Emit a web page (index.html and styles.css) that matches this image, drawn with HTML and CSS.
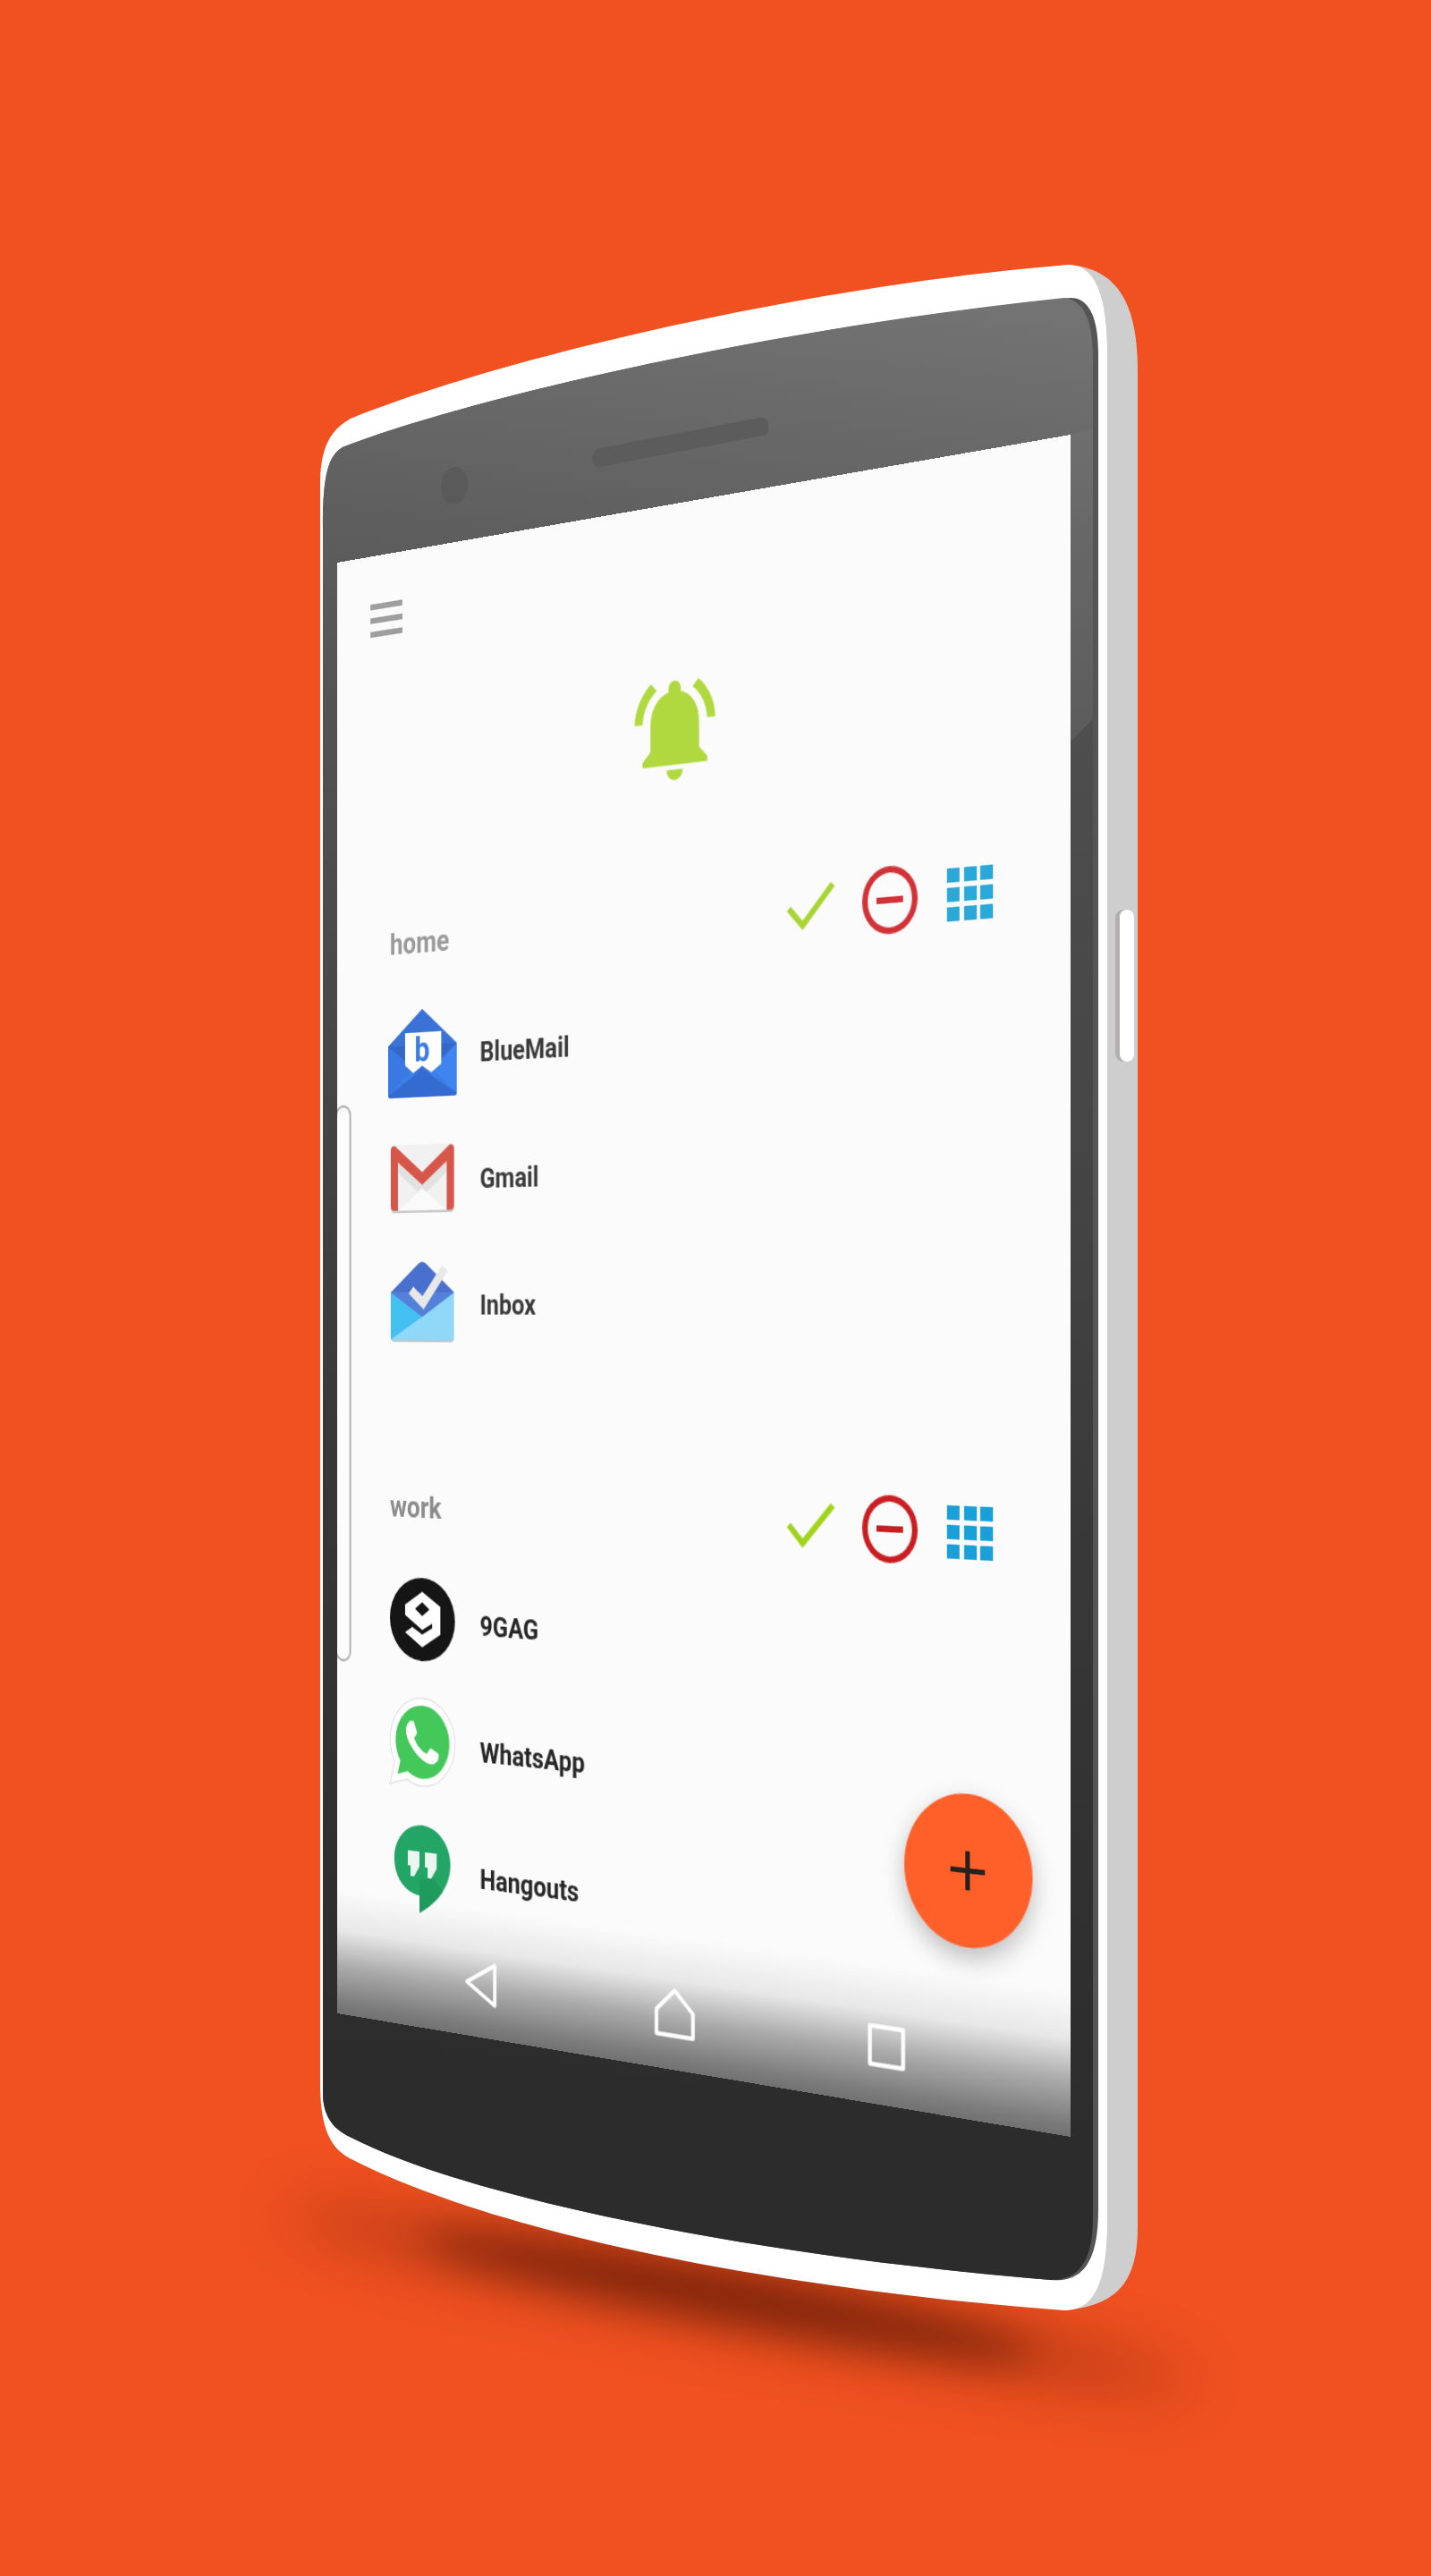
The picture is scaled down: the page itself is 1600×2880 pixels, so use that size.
FILE: index.html
```html
<!DOCTYPE html>
<html lang="en">
<head>
<meta charset="utf-8">
<title>Notification profiles</title>
<link rel="stylesheet" href="styles.css">
</head>
<body>
<main class="stage">
  <svg class="phone-art" viewBox="0 0 1600 2880" width="1600" height="2880" aria-hidden="true">
    <defs>
      <filter id="soft" x="-30%" y="-300%" width="160%" height="700%" color-interpolation-filters="sRGB"><feGaussianBlur stdDeviation="22"/></filter>
      <filter id="softer" x="-30%" y="-300%" width="160%" height="700%" color-interpolation-filters="sRGB"><feGaussianBlur stdDeviation="34"/></filter>
      <linearGradient id="face" gradientUnits="userSpaceOnUse" x1="1000" y1="330" x2="760" y2="2350">
        <stop offset="0" stop-color="#737373"/>
        <stop offset="0.15" stop-color="#5f5f5f"/>
        <stop offset="0.25" stop-color="#545454"/>
        <stop offset="0.4" stop-color="#4a4a4a"/>
        <stop offset="0.65" stop-color="#393939"/>
        <stop offset="0.82" stop-color="#323232"/>
        <stop offset="1" stop-color="#2c2c2c"/>
      </linearGradient>
      <linearGradient id="dusk" gradientUnits="userSpaceOnUse" x1="0" y1="805" x2="0" y2="1400">
        <stop offset="0" stop-color="#000" stop-opacity=".1"/>
        <stop offset="1" stop-color="#000" stop-opacity="0"/>
      </linearGradient>
    </defs>
    <ellipse class="shade" cx="826" cy="2570" rx="520" ry="34" transform="rotate(10.7 826 2570)" filter="url(#softer)" opacity="0.4"/>
    <ellipse class="shade" cx="815" cy="2567" rx="350" ry="26" transform="rotate(10.7 815 2567)" filter="url(#soft)" opacity="0.62"/>
    <path class="side" d="M1194 296C1250 300 1272 340 1272 415V2490C1272 2550 1250 2578 1190 2583Z"/>
    <rect class="button-shade" x="1247" y="1017" width="21" height="170" rx="9"/>
    <rect class="button" x="1252" y="1017" width="16" height="170" rx="8"/>
    <path class="shell" d="M1194 296C1225 296 1238 330 1238 400V2480C1238 2550 1225 2583 1190 2583C880 2560 560 2500 391 2413C370 2402 358 2380 358 2330V540C358 500 370 480 392 468C560 400 900 320 1194 296Z"/>
    <path class="rim" d="M1197 333C1215 333 1228 350 1228 395V2470C1228 2530 1210 2552 1175 2549C880 2525 540 2465 391 2389C372 2380 361 2365 361 2340V590C361 530 367 510 383 500C540 440 880 365 1197 333Z"/>
    <path class="face" d="M1190 333C1208 335 1222 352 1222 400V2480C1222 2530 1205 2549 1175 2549C880 2525 540 2465 391 2389C372 2380 361 2365 361 2340V590C361 530 367 510 383 500C540 440 880 365 1190 333Z"/>
    <path class="glint" d="M1197 486 1222 480V804L1197 829Z"/>
    <path class="dusk" d="M1197 829 1222 804V1400H1197Z"/>
    <ellipse class="lens" cx="508" cy="543" rx="15" ry="21" transform="rotate(8 508 543)"/>
    <path class="speaker" d="M672 501 849 467C857 465 860 472 859 480 858 490 856 486 848 488L670 522C664 523 661 517 662 511 663 505 666 502 672 501Z"/>
  </svg>

  <section class="screen">
    <header class="toolbar">
      <div class="menu"><span class="menu-bar"></span><span class="menu-bar"></span><span class="menu-bar"></span></div>
    </header>
    <svg class="bell" viewBox="0 0 24 24" width="96" height="100" preserveAspectRatio="none" aria-hidden="true"><path d="M7.58 4.08L6.15 2.65C3.75 4.48 2.17 7.3 2.03 10.5h2c.15-2.65 1.51-4.97 3.55-6.42zM19.97 10.5h2c-.15-3.2-1.73-6.02-4.12-7.85l-1.42 1.43c2.02 1.45 3.39 3.77 3.54 6.42zM18 11c0-3.07-1.64-5.64-4.5-6.32V4c0-.83-.67-1.5-1.5-1.5s-1.5.67-1.5 1.5v.68C7.63 5.36 6 7.92 6 11v5l-2 2v1h16v-1l-2-2v-5zm-6 11c.14 0 .27-.01.4-.04.65-.14 1.18-.58 1.44-1.18.1-.24.15-.5.15-.78h-4c.01 1.1.9 2 2.01 2z"/></svg>

    <div class="section section-home">
      <div class="section-head">
        <h2 class="section-title">home</h2>
        <div class="actions">
          <svg class="tick" viewBox="0 0 40 32" width="40" height="32" aria-hidden="true"><polyline points="-1,17 12,31 40,0"/></svg>
          <div class="minus"></div>
          <div class="tiles"><i></i><i></i><i></i><i></i><i></i><i></i><i></i><i></i><i></i></div>
        </div>
      </div>
      <div class="app-row">
        <svg class="app-icon" viewBox="0 0 80 80" width="80" height="80" aria-hidden="true">
          <path fill="#3c7fe8" d="M2 33 40 2 78 33V75a3 3 0 0 1-3 3H5a3 3 0 0 1-3-3Z"/>
          <path fill="#3a72d6" d="M2 33 40 2 78 33 40 64Z"/>
          <path fill="#3f84f0" d="M78 33V76L48 52Z"/>
          <path fill="#3a79e2" d="M2 33V76L32 52Z"/>
          <path fill="#3468c8" d="M2 33H21V46ZM78 33H61V46Z"/>
          <path fill="#336bd0" d="M2 76 40 54 78 76V75a3 3 0 0 1-3 3H5a3 3 0 0 1-3-3Z"/>
          <path fill="#fff" d="M21 22H61V50L50 57 40 51 30 57 21 50Z"/>
          <text class="logo-b" x="40" y="47">b</text>
        </svg>
        <span class="app-name">BlueMail</span>
      </div>
      <div class="app-row">
        <svg class="app-icon" viewBox="0 0 80 80" width="80" height="80" aria-hidden="true">
          <rect fill="#c9c9c9" x="5" y="13" width="70" height="57" rx="4"/>
          <rect fill="#f1f1f1" x="5" y="11" width="70" height="57" rx="4"/>
          <path fill="#e2e2e2" d="M13 26 40 46 67 26V35L40 56 13 35Z"/>
          <path fill="#fafafa" d="M13 68 40 49 67 68Z"/>
          <path fill="#d6574a" d="M5 15C5 12 8 11 10 12L40 35 70 12C72 11 75 12 75 15V64A4 4 0 0 1 71 68H67V26L40 46 13 26V68H9A4 4 0 0 1 5 64Z"/>
        </svg>
        <span class="app-name">Gmail</span>
      </div>
      <div class="app-row">
        <svg class="app-icon" viewBox="0 0 80 80" width="80" height="80" aria-hidden="true">
          <path fill="#b6c9d2" d="M5 33H75V70A4 4 0 0 1 71 74H9A4 4 0 0 1 5 70Z"/>
          <path fill="#8fd8f8" d="M5 31H75V68A4 4 0 0 1 71 72H9A4 4 0 0 1 5 68Z"/>
          <path fill="#44bff2" d="M5 31 40 52 5 72Z"/>
          <path fill="#4a70cd" d="M5 31 36 6Q40 3 44 6L75 31 40 52Z"/>
          <path fill="#5480da" d="M5 31H75L40 52Z"/>
          <polyline class="inbox-tick" points="27.5,29 41,40 65,10"/>
        </svg>
        <span class="app-name">Inbox</span>
      </div>
    </div>

    <div class="section section-work">
      <div class="section-head">
        <h2 class="section-title">work</h2>
        <div class="actions">
          <svg class="tick" viewBox="0 0 40 32" width="40" height="32" aria-hidden="true"><polyline points="-1,17 12,31 40,0"/></svg>
          <div class="minus"></div>
          <div class="tiles"><i></i><i></i><i></i><i></i><i></i><i></i><i></i><i></i><i></i></div>
        </div>
      </div>
      <div class="app-row">
        <svg class="app-icon" viewBox="0 0 80 80" width="80" height="80" aria-hidden="true">
          <circle fill="#151515" cx="40" cy="41" r="36"/>
          <path fill="#fff" fill-rule="evenodd" d="M40 17 60 29V53L40 65 21 53 29 48 40 54 51 48V44L40 50 21 38V29ZM40 26 32 32 40 38 48 32Z"/>
        </svg>
        <span class="app-name">9GAG</span>
      </div>
      <div class="app-row">
        <svg class="app-icon" viewBox="-1.3 -0.3 26.6 25" width="80" height="80" preserveAspectRatio="none" aria-hidden="true">
          <path fill="#fff" stroke="#dcdcdc" stroke-width=".3" d="M20.464 3.488A11.815 11.815 0 0 0 12.05 0C5.495 0 .16 5.335.157 11.892c0 2.096.547 4.142 1.588 5.945L.057 24l6.305-1.654a11.882 11.882 0 0 0 5.683 1.448h.005c6.554 0 11.89-5.335 11.893-11.893a11.821 11.821 0 0 0-3.48-8.413z"/>
          <path class="wa-bubble" d="M12.051 21.785h-.004a9.87 9.87 0 0 1-5.031-1.378l-.361-.214-3.741.982.998-3.648-.235-.374a9.86 9.86 0 0 1-1.51-5.26c.001-5.45 4.436-9.884 9.888-9.884 2.64 0 5.122 1.03 6.988 2.898a9.825 9.825 0 0 1 2.893 6.994c-.003 5.45-4.437 9.884-9.885 9.884"/>
          <path fill="#fff" d="M17.472 14.382c-.297-.149-1.758-.867-2.03-.967-.273-.099-.471-.148-.67.15-.197.297-.767.966-.94 1.164-.173.199-.347.223-.644.075-.297-.15-1.255-.463-2.39-1.475-.883-.788-1.48-1.761-1.653-2.059-.173-.297-.018-.458.13-.606.134-.133.298-.347.446-.52.149-.174.198-.298.298-.497.099-.198.05-.371-.025-.52-.075-.149-.669-1.612-.916-2.207-.242-.579-.487-.5-.669-.51-.173-.008-.371-.01-.57-.01-.198 0-.52.074-.792.372-.272.297-1.04 1.016-1.04 2.479 0 1.462 1.065 2.875 1.213 3.074.149.198 2.096 3.2 5.077 4.487.709.306 1.262.489 1.694.625.712.227 1.36.195 1.871.118.571-.085 1.758-.719 2.006-1.413.248-.694.248-1.289.173-1.413-.074-.124-.272-.198-.57-.347"/>
        </svg>
        <span class="app-name">WhatsApp</span>
      </div>
      <div class="app-row">
        <svg class="app-icon" viewBox="0 0 80 80" width="80" height="80" aria-hidden="true">
          <path fill="#23a566" d="M40 3C23 3 9 17 9 34C9 51 21 63 37 64V79C52 71 71 56 71 34C71 17 57 3 40 3Z"/>
          <path fill="#1d9558" d="M37 64V79C46 74 56 67 63 58L52 47 37 51Z" opacity=".6"/>
          <path fill="#eaf6ef" d="M24 26H37V39L31 48H27V39H24ZM43 26H56V39L50 48H46V39H43Z"/>
        </svg>
        <span class="app-name">Hangouts</span>
      </div>
    </div>

    <div class="drawer-handle"></div>

    <nav class="nav">
      <svg viewBox="0 0 36 40" width="36" height="40" aria-hidden="true"><path d="M3 20 33 3V37Z"/></svg>
      <svg viewBox="0 0 42 42" width="42" height="42" aria-hidden="true"><path d="M21 2 39 19V39H3V19Z"/></svg>
      <svg viewBox="0 0 36 36" width="36" height="36" aria-hidden="true"><path d="M3 3H33V33H3Z"/></svg>
    </nav>

    <div class="fab">
      <svg viewBox="0 0 30 30" width="30" height="30" aria-hidden="true"><path d="M13 0H17V13H30V17H17V30H13V17H0V13H13Z"/></svg>
    </div>
  </section>
</main>
</body>
</html>
```
FILE: styles.css
```css
* { box-sizing: border-box; }
html, body { margin: 0; padding: 0; }
body { background: #f15120; font-family: Roboto, "Liberation Sans", sans-serif; }

.stage { position: relative; width: 1600px; height: 2880px; overflow: hidden; background: #f15120; }
.phone-art { position: absolute; left: 0; top: 0; display: block; }

.shade { fill: #561503; }
.side { fill: #cecece; }
.button-shade { fill: #b3afad; }
.button { fill: #fff; }
.shell { fill: #fff; }
.rim { fill: #555; }
.face { fill: url(#face); }
.glint { fill: #fff; opacity: .03; }
.dusk { fill: url(#dusk); }
.lens { fill: #5a5a5a; }
.speaker { fill: #5c5c5c; }

.screen {
  position: absolute; left: 0; top: 0;
  width: 720px; height: 1280px;
  display: flex; flex-direction: column;
  overflow: hidden;
  background: #fbfbfb;
  transform-origin: 0 0;
  transform: matrix3d(0.8934, -0.29828, 0, -0.00020508, 0, 1.26719, 0, 0, 0, 0, 1, 0, 377, 629, 0, 1);
}

.toolbar { flex: none; height: 112px; padding-left: 38px; display: flex; align-items: center; }
.menu { display: flex; flex-direction: column; gap: 7px; filter: blur(.4px); }
.menu-bar { display: block; width: 36px; height: 5px; background: #9e9e9e; }

.bell { flex: none; align-self: center; margin-top: 22px; fill: #b0d93f; }

.section { flex: none; }
.section-home { margin-top: 78px; }
.section-work { margin-top: 96px; }

.section-head { display: flex; align-items: flex-start; height: 71px; padding: 0 66px 0 60px; }
.section-work .section-head { height: 69px; }
.section-title { margin: 14px 0 0; font-size: 26px; line-height: 30px; font-weight: 700; color: #9a9a9a; filter: blur(.4px); }
.section-work .section-title { margin-top: 12px; color: #8c8c8c; }

.actions { margin-left: auto; height: 52px; display: flex; align-items: center; }
.tick { overflow: visible; fill: none; stroke: #a8d534; stroke-width: 5; }
.section-work .tick { stroke: #a0d41a; }
.minus {
  width: 50px; height: 53px; margin-left: 27px;
  display: flex; align-items: center; justify-content: center;
  border: 5.5px solid #d03238; border-radius: 50%;
  filter: blur(.4px);
}
.minus::after { content: ""; width: 24px; height: 5px; background: #d03238; }
.section-work .minus { border-color: #c81e22; }
.section-work .minus::after { background: #c81e22; }
.tiles { margin-left: 26px; display: grid; grid-template-columns: repeat(3, 11px); grid-auto-rows: 11px; gap: 4px 3.5px; }
.tiles i { display: block; background: #2aa9d9; }
.section-work .tiles i { background: #1a9fd8; }

.app-row { display: flex; align-items: center; height: 108px; padding-left: 56px; }
.app-icon { flex: none; filter: blur(.5px); }
.app-name { margin: 3px 0 0 23px; font-size: 24px; font-weight: 700; color: #3a3a3a; filter: blur(.4px); }
.section-work .app-name { margin-top: 5px; color: #262626; }
.logo-b { font-family: Roboto, sans-serif; font-size: 30px; font-weight: 700; text-anchor: middle; fill: #3b7de6; }
.inbox-tick { fill: none; stroke: #e8e8e8; stroke-width: 8; }
.wa-bubble { fill: #45c85a; }

.drawer-handle {
  position: absolute; left: -2px; top: 479px;
  width: 18px; height: 490px;
  background: #fcfcfc;
  border: 2px solid #b0b0b0;
  border-radius: 9px;
}

.nav {
  position: absolute; left: 0; right: 0; bottom: 0;
  height: 110px; padding: 18px 60px 0;
  display: grid; grid-template-columns: repeat(3, 1fr); place-items: center;
  background: linear-gradient(to bottom, rgba(0,0,0,0) 0%, rgba(0,0,0,.08) 33%, rgba(0,0,0,.32) 62%, rgba(0,0,0,.5) 90%, rgba(0,0,0,.55) 100%);
}
.nav path { fill: none; stroke: #fff; stroke-width: 3.5; stroke-linejoin: round; }

.fab {
  position: absolute; right: 32px; bottom: 132px;
  width: 112px; height: 118px;
  display: flex; align-items: center; justify-content: center;
  border-radius: 50%;
  background: #ff5f29;
  box-shadow: 0 8px 20px rgba(0,0,0,.25);
}
.fab path { fill: #26211f; }
```
